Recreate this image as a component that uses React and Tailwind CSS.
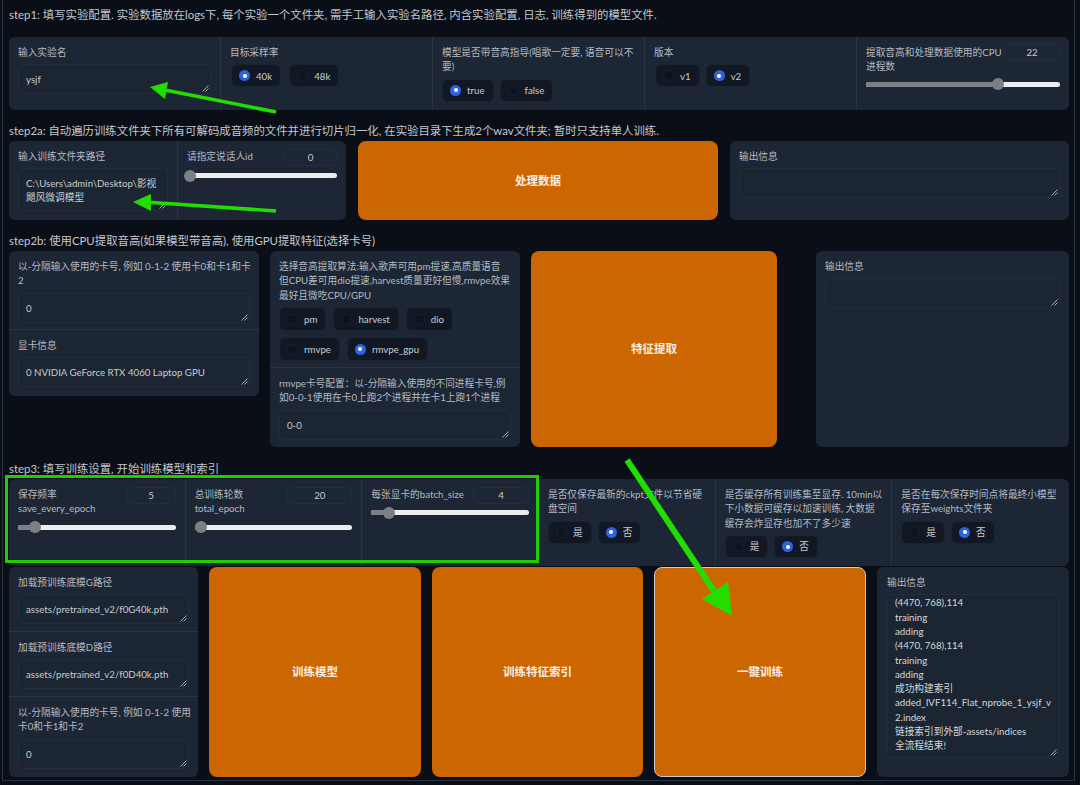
import React from 'react';

const Label = ({ children, className = '' }) => (
  <div className={`text-[9.7px] leading-[14.4px] text-[#b4bac2] ${className}`}>{children}</div>
);

const StepText = ({ children, className = '' }) => (
  <div className={`h-4 text-[11.4px] leading-4 text-[#c4c8cf] ${className}`}>{children}</div>
);

function Grip() {
  return (
    <svg className="absolute right-[1px] bottom-[1px] w-[7px] h-[7px]" viewBox="0 0 7 7">
      <path d="M0.5 6.5 L6.5 0.5 M3.5 6.5 L6.5 3.5" stroke="#b8bcc2" strokeWidth="0.9" />
    </svg>
  );
}

const TextBox = ({ children, className = 'h-[30px]' }) => (
  <div className={`relative mt-[5px] rounded border border-[#232e3c] bg-[#1c2633] px-[7px] flex items-center text-[9.7px] leading-[14.4px] text-[#c8ccd2] ${className}`}>
    <div>{children}</div>
    <Grip />
  </div>
);

const NumBox = ({ value, className = 'w-14' }) => (
  <div className={`h-[17px] shrink-0 rounded border border-[#232e3c] flex items-center justify-center text-[9.7px] text-[#c8ccd2] ${className}`}>
    {value}
  </div>
);

function Radio({ label, checked, className = 'h-[23px]' }) {
  return (
    <div className={`pl-[7px] pr-2 flex items-center gap-[6px] rounded-md border border-[#1a2330] bg-[#111824] text-[9.7px] text-[#c8ccd2] ${className}`}>
      {checked ? (
        <span className="w-[11px] h-[11px] rounded-full bg-[#2f62e0] flex items-center justify-center">
          <span className="w-1 h-1 rounded-full bg-white" />
        </span>
      ) : (
        <span className="w-[11px] h-[11px] rounded-full bg-[#0c1420] border border-[#1a2330]" />
      )}
      {label}
    </div>
  );
}

function Slider({ pct, className = '' }) {
  return (
    <div className={`relative h-[5px] rounded-full bg-[#eceded] ${className}`}>
      <div className="absolute left-0 top-0 h-full rounded-l-full bg-[#7c8085]" style={{ width: `${pct}%` }} />
      <div className="absolute top-[-3.5px] w-3 h-3 rounded-full bg-[#7c8085] -ml-[6px]" style={{ left: `${pct}%` }} />
    </div>
  );
}

const OrangeButton = ({ children, className = '' }) => (
  <div className={`rounded-lg bg-[#cc6600] flex items-center justify-center text-[11.5px] font-bold text-[#f8efe6] ${className}`}>
    {children}
  </div>
);

const Panel = ({ children, className = '' }) => (
  <div className={`rounded-md bg-[#1c2634] ${className}`}>{children}</div>
);

const Cell = ({ children, className = '' }) => (
  <div className={`px-[9px] pt-2 ${className}`}>{children}</div>
);

const outputLines = [
  '(4470, 768),114',
  'training',
  'adding',
  '(4470, 768),114',
  'training',
  'adding',
  '成功构建索引',
  'added_IVF114_Flat_nprobe_1_ysjf_v',
  '2.index',
  '链接索引到外部-assets/indices',
  '全流程结束!',
];

function Overlay() {
  const green = '#22dd00';
  return (
    <svg className="absolute left-0 top-0 w-[1080px] h-[785px] pointer-events-none" viewBox="0 0 1080 785">
      <rect x="6.5" y="476.5" width="531" height="85" fill="none" stroke="#22cc00" strokeWidth="3" />
      <path d="M276 112 L160 89" stroke={green} strokeWidth="3.5" />
      <polygon points="150,87 168,82 165,99" fill={green} />
      <path d="M276 211 L145 202" stroke={green} strokeWidth="3.5" />
      <polygon points="133,202 151,194 151,211" fill={green} />
      <path d="M627 460 L720 600" stroke={green} strokeWidth="6" />
      <polygon points="732,616 728,582 702,599" fill={green} />
    </svg>
  );
}

export default function App() {
  return (
    <div className="relative h-screen overflow-hidden bg-[#0a0e16] [font-family:Lato,'Noto_Sans_CJK_SC',sans-serif]">
      <div className="mx-[2px] w-[1073px] h-[781px] border-x border-b border-[#2b3442] pl-[6px] pr-[5px] pt-[7px]">
        <StepText>step1: 填写实验配置. 实验数据放在logs下, 每个实验一个文件夹, 需手工输入实验名路径, 内含实验配置, 日志, 训练得到的模型文件.</StepText>

        {/* step1 row */}
        <Panel className="mt-[14px] h-[73px] grid grid-cols-5 divide-x divide-[#2b3644]">
          <Cell>
            <Label>输入实验名</Label>
            <TextBox>ysjf</TextBox>
          </Cell>
          <Cell>
            <Label>目标采样率</Label>
            <div className="mt-[5px] flex gap-2 pl-[1px]">
              <Radio label="40k" checked />
              <Radio label="48k" />
            </div>
          </Cell>
          <Cell>
            <Label>模型是否带音高指导(唱歌一定要, 语音可以不要)</Label>
            <div className="mt-[5px] flex gap-[6px]">
              <Radio label="true" checked />
              <Radio label="false" />
            </div>
          </Cell>
          <Cell>
            <Label>版本</Label>
            <div className="mt-[5px] flex gap-[6px] pl-[1px]">
              <Radio label="v1" />
              <Radio label="v2" checked />
            </div>
          </Cell>
          <Cell>
            <div className="flex -mt-[1px]">
              <Label className="flex-1 pt-[1px]">提取音高和处理数据使用的CPU进程数</Label>
              <NumBox value="22" />
            </div>
            <Slider pct={68} className="mt-[8px]" />
          </Cell>
        </Panel>

        <StepText className="mt-[13px]">step2a: 自动遍历训练文件夹下所有可解码成音频的文件并进行切片归一化, 在实验目录下生成2个wav文件夹; 暂时只支持单人训练.</StepText>

        {/* step2a row */}
        <div className="mt-[2px] h-[79px] grid grid-cols-[337px_360px_1fr] gap-3">
          <Panel className="grid grid-cols-[169px_1fr] divide-x divide-[#2b3644]">
            <Cell>
              <Label>输入训练文件夹路径</Label>
              <TextBox className="h-[43px]">C:\Users\admin\Desktop\影视飓风微调模型</TextBox>
            </Cell>
            <Cell>
              <div className="flex items-start justify-between">
                <Label>请指定说话人id</Label>
                <NumBox value="0" className="w-[53px]" />
              </div>
              <Slider pct={2} className="mt-[7px]" />
            </Cell>
          </Panel>
          <OrangeButton>处理数据</OrangeButton>
          <Panel>
            <Cell>
              <Label>输出信息</Label>
              <TextBox />
            </Cell>
          </Panel>
        </div>

        <StepText className="mt-[13px]">step2b: 使用CPU提取音高(如果模型带音高), 使用GPU提取特征(选择卡号)</StepText>

        {/* step2b row */}
        <div className="mt-[2px] h-[196px] flex">
          <Panel className="w-[250px] h-[145px] divide-y divide-[#2b3644]">
            <Cell className="h-[79px]">
              <Label className="-mr-2">以-分隔输入使用的卡号, 例如 0-1-2 使用卡0和卡1和卡<br />2</Label>
              <TextBox>0</TextBox>
            </Cell>
            <Cell>
              <Label>显卡信息</Label>
              <TextBox>0 NVIDIA GeForce RTX 4060 Laptop GPU</TextBox>
            </Cell>
          </Panel>
          <Panel className="ml-[11px] w-[250px] divide-y divide-[#2b3644]">
            <Cell className="h-[117px]">
              <Label>选择音高提取算法:输入歌声可用pm提速,高质量语音<br />但CPU差可用dio提速,harvest质量更好但慢,rmvpe效果<br />最好且微吃CPU/GPU</Label>
              <div className="mt-[5px] flex flex-wrap gap-x-[7px] gap-y-[6px]">
                <Radio className="h-6" label="pm" />
                <Radio className="h-6" label="harvest" />
                <Radio className="h-6" label="dio" />
                <Radio className="h-6" label="rmvpe" />
                <Radio className="h-6" label="rmvpe_gpu" checked />
              </div>
            </Cell>
            <Cell>
              <Label>rmvpe卡号配置：以-分隔输入使用的不同进程卡号,例如0-0-1使用在卡0上跑2个进程并在卡1上跑1个进程</Label>
              <TextBox>0-0</TextBox>
            </Cell>
          </Panel>
          <OrangeButton className="ml-[11px] w-[246px]">特征提取</OrangeButton>
          <Panel className="ml-[39px] flex-1">
            <Cell>
              <Label>输出信息</Label>
              <TextBox />
            </Cell>
          </Panel>
        </div>

        <StepText className="mt-[14px]">step3: 填写训练设置, 开始训练模型和索引</StepText>

        {/* step3 settings */}
        <Panel className="mt-[2px] h-[87px] grid grid-cols-6 divide-x divide-[#2b3644]">
          <Cell>
            <div className="flex justify-between">
              <Label>保存频率<br />save_every_epoch</Label>
              <NumBox value="5" className="w-[49px]" />
            </div>
            <Slider pct={11} className="mt-[9px]" />
          </Cell>
          <Cell>
            <div className="flex justify-between">
              <Label>总训练轮数<br />total_epoch</Label>
              <NumBox value="20" className="w-[65px]" />
            </div>
            <Slider pct={4} className="mt-[9px]" />
          </Cell>
          <Cell>
            <div className="flex justify-between">
              <Label>每张显卡的batch_size</Label>
              <NumBox value="4" className="w-14" />
            </div>
            <Slider pct={11} className="mt-[6px]" />
          </Cell>
          <Cell>
            <Label>是否仅保存最新的ckpt文件以节省硬盘空间</Label>
            <div className="mt-[5px] flex gap-[6px]">
              <Radio label="是" />
              <Radio label="否" checked />
            </div>
          </Cell>
          <Cell>
            <Label>是否缓存所有训练集至显存. 10min以下小数据可缓存以加速训练, 大数据缓存会炸显存也加不了多少速</Label>
            <div className="mt-[5px] flex gap-[6px]">
              <Radio label="是" />
              <Radio label="否" checked />
            </div>
          </Cell>
          <Cell>
            <Label>是否在每次保存时间点将最终小模型保存至weights文件夹</Label>
            <div className="mt-[5px] flex gap-[6px]">
              <Radio label="是" />
              <Radio label="否" checked />
            </div>
          </Cell>
        </Panel>

        {/* step3 actions */}
        <div className="mt-[1px] h-[210px] grid grid-cols-[189px_212px_211px_212px_1fr] gap-[11px]">
          <Panel className="divide-y divide-[#2b3644]">
            <Cell className="h-[65px]">
              <Label>加载预训练底模G路径</Label>
              <TextBox>assets/pretrained_v2/f0G40k.pth</TextBox>
            </Cell>
            <Cell className="h-[65px]">
              <Label>加载预训练底模D路径</Label>
              <TextBox>assets/pretrained_v2/f0D40k.pth</TextBox>
            </Cell>
            <Cell>
              <Label className="-mr-1">以-分隔输入使用的卡号, 例如 0-1-2 使用<br />卡0和卡1和卡2</Label>
              <TextBox>0</TextBox>
            </Cell>
          </Panel>
          <OrangeButton>训练模型</OrangeButton>
          <OrangeButton>训练特征索引</OrangeButton>
          <OrangeButton className="border border-[#c9ccd0]">一键训练</OrangeButton>
          <Panel>
            <Cell className="px-[10px]">
              <Label>输出信息</Label>
              <TextBox className="h-[164px] items-start pr-[3px] text-[#d4d7dc]">
                {outputLines.map((line, i) => (
                  <div key={i} className="break-all leading-[14.3px]">{line}</div>
                ))}
              </TextBox>
            </Cell>
          </Panel>
        </div>
      </div>
      <Overlay />
    </div>
  );
}
